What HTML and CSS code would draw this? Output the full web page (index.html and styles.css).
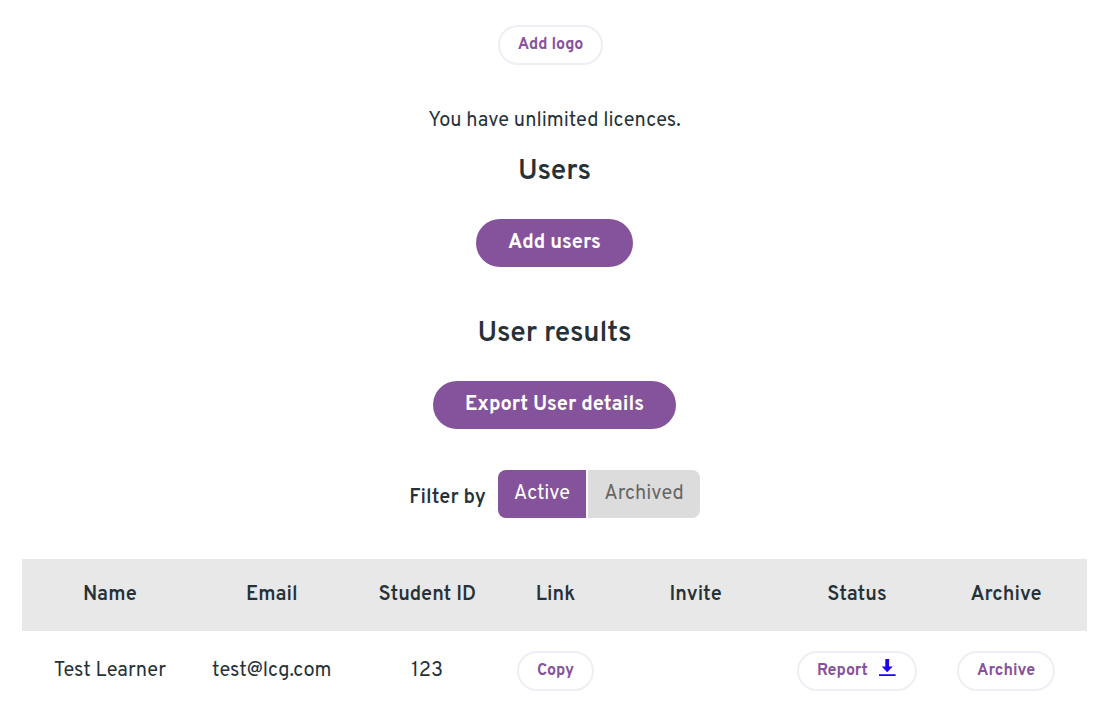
FILE: index.html
```html
<!DOCTYPE html>
<html lang="en">
<head>
<meta charset="utf-8">
<meta name="viewport" content="width=device-width, initial-scale=1">
<title>Users</title>
<link rel="stylesheet" href="styles.css">
</head>
<body>
<main class="page">
  <div class="logo-row">
    <button type="button" class="btn-outline">Add logo</button>
  </div>
  <p class="licences">You have unlimited licences.</p>

  <section class="section">
    <h2 class="heading">Users</h2>
    <button type="button" class="btn-primary">Add users</button>
  </section>

  <section class="section">
    <h2 class="heading">User results</h2>
    <button type="button" class="btn-primary">Export User details</button>
  </section>

  <div class="filter">
    <span class="filter-label" id="filter-label">Filter by</span>
    <div class="toggle" role="group" aria-labelledby="filter-label">
      <button type="button" class="toggle-item is-active" aria-pressed="true">Active</button>
      <button type="button" class="toggle-item" aria-pressed="false">Archived</button>
    </div>
  </div>

  <table class="results">
    <colgroup>
      <col class="col-name"><col class="col-email"><col class="col-id"><col class="col-link"><col class="col-invite"><col class="col-status"><col class="col-archive">
    </colgroup>
    <thead>
      <tr>
        <th scope="col">Name</th>
        <th scope="col">Email</th>
        <th scope="col">Student ID</th>
        <th scope="col">Link</th>
        <th scope="col">Invite</th>
        <th scope="col">Status</th>
        <th scope="col">Archive</th>
      </tr>
    </thead>
    <tbody>
      <tr>
        <td>Test Learner</td>
        <td>test@lcg.com</td>
        <td>123</td>
        <td><button type="button" class="btn-outline">Copy</button></td>
        <td></td>
        <td>
          <button type="button" class="btn-outline">Report
            <svg class="icon" viewBox="0 0 18 20" aria-hidden="true"><path d="M6.3 0h3.8v7.6h3.6L8.2 13.2 2.7 7.6h3.6zM0 15.2h16.6v1.8H0z"/></svg>
          </button>
        </td>
        <td><button type="button" class="btn-outline">Archive</button></td>
      </tr>
    </tbody>
  </table>
</main>
</body>
</html>
```
FILE: styles.css
```css
* {
  box-sizing: border-box;
}

body {
  margin: 0;
  background: #fff;
  color: #263238;
  font-family: Overpass, Roboto, "Liberation Sans", sans-serif;
  font-size: 20px;
  line-height: 32px;
}

button {
  border: 0;
  font-family: inherit;
  cursor: pointer;
}

.page {
  padding: 25px 19px 24px 22px;
  text-align: center;
}

.logo-row {
  display: flex;
  justify-content: center;
  padding-right: 8px;
}

.btn-outline {
  display: inline-flex;
  align-items: center;
  gap: 11px;
  padding: 8px 18px;
  border: 2px solid #f2edf5;
  border-radius: 20px;
  background: #fff;
  color: #85539b;
  font-size: 16px;
  font-weight: 700;
  line-height: 20px;
  vertical-align: middle;
}

.icon {
  width: 18px;
  height: 20px;
  margin-top: -4px;
  fill: #1a00ff;
}

.licences {
  margin: 40px 0 0;
}

.section {
  margin-bottom: 45px;
}

.heading {
  margin: 0 0 27px;
  padding-top: 15px;
  font-size: 28px;
  font-weight: 600;
  line-height: 40px;
}

.section + .section {
  margin-bottom: 41px;
}

.section + .section .heading {
  padding-top: 2px;
}

.btn-primary {
  display: block;
  margin: 0 auto;
  padding: 8px 32px;
  border-radius: 24px;
  background: #85539b;
  color: #fff;
  font-size: 20px;
  font-weight: 700;
  line-height: 32px;
}

.filter {
  display: flex;
  justify-content: center;
  gap: 12px;
}

.filter-label {
  padding-top: 12px;
  font-weight: 600;
}

.toggle {
  display: flex;
  gap: 2px;
  overflow: hidden;
  border-radius: 8px;
}

.toggle-item {
  padding: 8px 16px;
  background: #dcdcdc;
  color: #666;
  font-size: 20px;
  line-height: 32px;
}

.toggle-item.is-active {
  background: #85539b;
  color: #fff;
}

.results {
  width: 100%;
  margin-top: 41px;
  border-collapse: collapse;
  table-layout: fixed;
}

.col-name { width: 16.5%; }
.col-email { width: 13.9%; }
.col-id { width: 15.3%; }
.col-link { width: 8.8%; }
.col-invite { width: 17.5%; }
.col-status { width: 12.8%; }
.col-archive { width: 15.2%; }

.results th {
  padding: 20px 0;
  background: #e8e8e8;
  font-weight: 600;
}

.results td {
  padding: 20px 0;
  white-space: nowrap;
}
```
